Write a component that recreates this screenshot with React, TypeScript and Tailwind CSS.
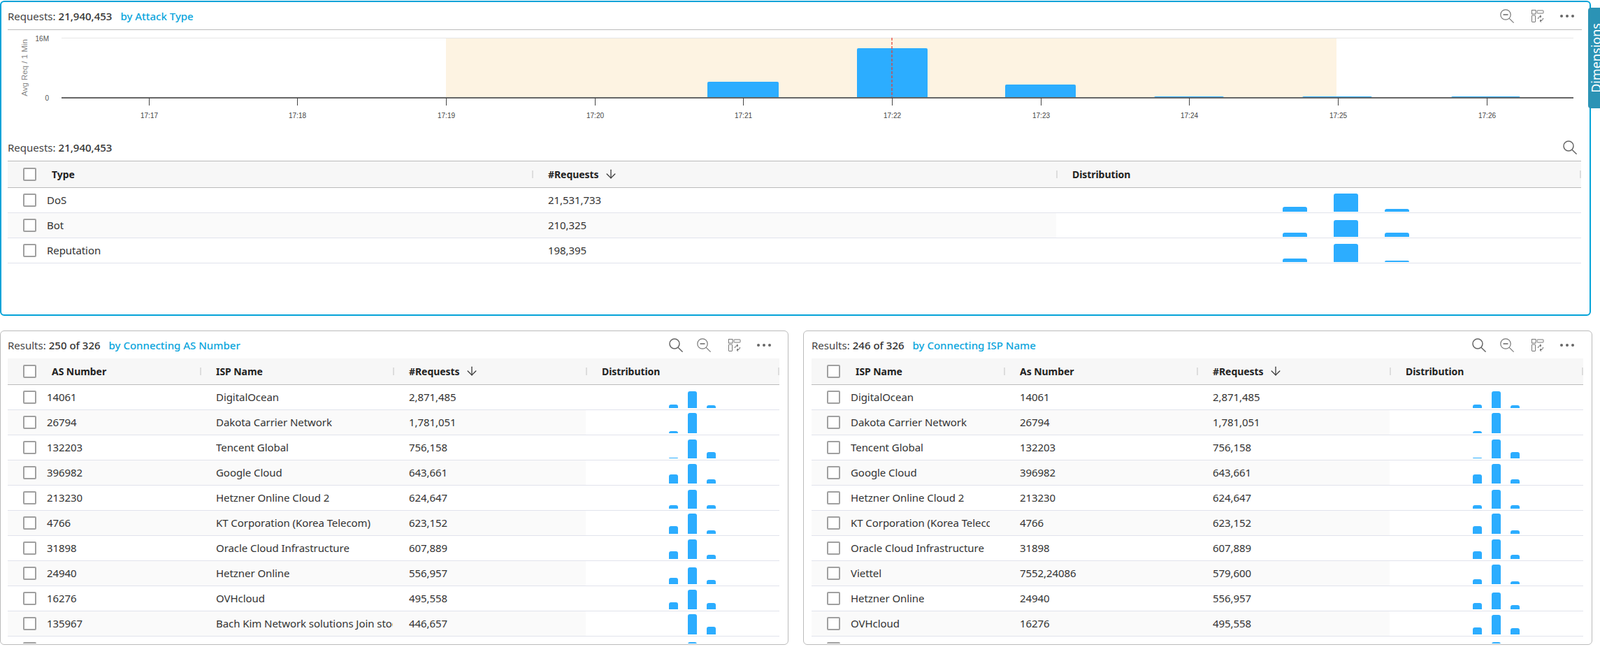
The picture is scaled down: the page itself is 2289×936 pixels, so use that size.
import { ArrowDown } from 'lucide-react';

type Row = { cells: string[]; bars: number[] };

const asRows: Row[] = [
  { cells: ['14061', 'DigitalOcean', '2,871,485'], bars: [5, 24, 4] },
  { cells: ['26794', 'Dakota Carrier Network', '1,781,051'], bars: [3, 29, 0] },
  { cells: ['132203', 'Tencent Global', '756,158'], bars: [1, 27, 9] },
  { cells: ['396982', 'Google Cloud', '643,661'], bars: [13, 28, 6] },
  { cells: ['213230', 'Hetzner Online Cloud 2', '624,647'], bars: [5, 27, 5] },
  { cells: ['4766', 'KT Corporation (Korea Telecom)', '623,152'], bars: [11, 29, 5] },
  { cells: ['31898', 'Oracle Cloud Infrastructure', '607,889'], bars: [11, 28, 6] },
  { cells: ['24940', 'Hetzner Online', '556,957'], bars: [9, 24, 6] },
  { cells: ['16276', 'OVHcloud', '495,558'], bars: [10, 28, 9] },
  { cells: ['135967', 'Bach Kim Network solutions Join stock', '446,657'], bars: [0, 29, 11] },
  { cells: ['', '', ''], bars: [0, 25, 0] },
];

const ispRows: Row[] = [
  { cells: ['DigitalOcean', '14061', '2,871,485'], bars: [5, 24, 4] },
  { cells: ['Dakota Carrier Network', '26794', '1,781,051'], bars: [3, 29, 0] },
  { cells: ['Tencent Global', '132203', '756,158'], bars: [1, 27, 9] },
  { cells: ['Google Cloud', '396982', '643,661'], bars: [13, 28, 6] },
  { cells: ['Hetzner Online Cloud 2', '213230', '624,647'], bars: [5, 27, 5] },
  { cells: ['KT Corporation (Korea Telecom)', '4766', '623,152'], bars: [11, 29, 5] },
  { cells: ['Oracle Cloud Infrastructure', '31898', '607,889'], bars: [11, 28, 6] },
  { cells: ['Viettel', '7552,24086', '579,600'], bars: [7, 28, 4] },
  { cells: ['Hetzner Online', '24940', '556,957'], bars: [9, 24, 6] },
  { cells: ['OVHcloud', '16276', '495,558'], bars: [10, 28, 9] },
  { cells: ['', '', ''], bars: [0, 25, 0] },
];

const typeRows: Row[] = [
  { cells: ['DoS', '21,531,733'], bars: [7, 26, 4] },
  { cells: ['Bot', '210,325'], bars: [6, 24, 6] },
  { cells: ['Reputation', '198,395'], bars: [5, 26, 2] },
];

const SearchIcon = () => (
  <svg width="20" height="20" viewBox="0 0 20 20" fill="none" stroke="#666" strokeWidth="1.5">
    <circle cx="8" cy="8" r="7" />
    <path d="M13 13.2 19.6 19.6" />
  </svg>
);

const ZoomOutIcon = () => (
  <svg width="20" height="20" viewBox="0 0 20 20" fill="none" stroke="#777" strokeWidth="1.2">
    <circle cx="8" cy="8" r="7.2" />
    <path d="M13.2 13.4 19.6 19.6" />
    <path d="M4.5 8h7" strokeWidth="1.5" stroke="#666" />
  </svg>
);

const ColumnsIcon = () => (
  <svg width="18" height="18" viewBox="0 0 18 18" fill="none" stroke="#777" strokeWidth="1">
    <rect x="0.5" y="0.5" width="5.5" height="5.5" />
    <rect x="8" y="1" width="9" height="4" rx="0.5" />
    <rect x="0.5" y="8" width="5" height="9.5" rx="0.5" />
    <path d="M9.5 13c0-2.2 1.5-3.5 4-3.5M12 7.6l2 1.9-2 1.9" stroke="#555" />
    <path d="M16.5 12c0 2.5-1.6 3.8-4 3.8M14 13.9l-2 1.9 2 1.9" stroke="#555" />
  </svg>
);

const DotsIcon = () => (
  <div className="flex w-[20px] justify-between">
    <span className="size-[4px] rounded-full bg-[#666]" />
    <span className="size-[4px] rounded-full bg-[#666]" />
    <span className="size-[4px] rounded-full bg-[#666]" />
  </div>
);

const Checkbox = () => <span className="block size-[19px] shrink-0 rounded-[2px] border-2 border-[#a0a0a0] bg-white" />;

const Sep = () => <span className="block h-[11px] w-[2px] shrink-0 bg-[#dddddd]" />;

const Spark = ({ bars, className }: { bars: number[]; className: string }) => (
  <div className={`flex h-full items-end ${className}`}>
    {bars.map((h, i) => (
      <span key={i} className="block shrink-0 rounded-t-[3px] bg-[#2cadff]" style={{ height: h, width: 'var(--bar)' }} />
    ))}
  </div>
);

const Title = ({ label, value, by }: { label: string; value: string; by?: string }) => (
  <div className="flex items-baseline text-[15px] leading-[20px] text-[#444]">
    <span>{label}</span>
    <span className="ml-[4px] font-medium text-[#333]">{value}</span>
    {by && <span className="ml-[12px] font-medium text-[#0aa5dc]">{by}</span>}
  </div>
);

const Tools = ({ search }: { search?: boolean }) => (
  <div className="flex items-center">
    {search && <div className="mr-[20px]"><SearchIcon /></div>}
    <ZoomOutIcon />
    <div className="ml-[25px]"><ColumnsIcon /></div>
    <div className="ml-[23px]"><DotsIcon /></div>
  </div>
);

const Table = ({
  heads,
  rows,
  cols,
  spark,
  barVars,
}: {
  heads: string[];
  rows: Row[];
  cols: string;
  spark: string;
  barVars: string;
}) => (
  <div className={`text-[15px] tracking-[-0.06px] text-[#333] ${barVars}`}>
    <div className={`grid h-[38px] border-b border-[#bbbbbb] bg-[#f7f7f7] pb-[1px] text-[14px] font-bold text-[#222] ${cols}`}>
      <div className="flex items-center pl-[22px]">
        <Checkbox />
        <span className="ml-[22px]">{heads[0]}</span>
      </div>
      {heads.slice(1, -1).map((h) => (
        <div key={h} className="flex items-center">
          <Sep />
          <span className="ml-[21px]">{h}</span>
          {h === '#Requests' && <ArrowDown size={20} strokeWidth={1.5} className="ml-[8px] text-[#333]" />}
        </div>
      ))}
      <div className="flex items-center justify-between">
        <div className="flex items-center">
          <Sep />
          <span className="ml-[21px]">{heads[heads.length - 1]}</span>
        </div>
        <Sep />
      </div>
    </div>
    {rows.map((r, i) => (
      <div key={i} className={`grid h-[36px] border-b border-[#e1e3ec] ${cols}`}>
        <div className={`flex items-center pl-[22px] pr-[20px] ${i % 2 ? 'bg-[#fafafa]' : ''}`}>
          <Checkbox />
          <span className="ml-[15px] overflow-hidden whitespace-nowrap">{r.cells[0]}</span>
        </div>
        {r.cells.slice(1).map((c, j) => (
          <div key={j} className={`flex items-center pl-[23px] ${i % 2 ? 'bg-[#fafafa]' : ''}`}>
            <span className="overflow-hidden whitespace-nowrap">{c}</span>
          </div>
        ))}
        <Spark bars={r.bars} className={spark} />
      </div>
    ))}
  </div>
);

const Chart = () => {
  const ticks = ['17:17', '17:18', '17:19', '17:20', '17:21', '17:22', '17:23', '17:24', '17:25', '17:26'];
  const bars = [
    { x: 1012, w: 102, y: 117 },
    { x: 1226, w: 101, y: 69 },
    { x: 1438, w: 101, y: 121 },
    { x: 1651, w: 100, y: 138 },
    { x: 1863, w: 100, y: 138 },
    { x: 2076, w: 99, y: 138 },
  ];
  return (
    <svg width="2252" height="149" viewBox="11 43 2252 149" className="block" fontFamily="'Liberation Sans', sans-serif">
      <rect x="638" y="54" width="1274" height="86" fill="#fdf3e2" />
      <path d="M88 54.5H2251" stroke="#e6e6e6" />
      {bars.map((b) => (
        <path
          key={b.x}
          d={`M${b.x} 139.5V${b.y + 2}q0-2 2-2H${b.x + b.w - 2}q2 0 2 2V139.5Z`}
          fill="#2cadff"
        />
      ))}
      <path d="M1276 54V140" stroke="#e8392f" strokeWidth="1.2" strokeDasharray="4 2" />
      <path d="M88 140H2251" stroke="#666" strokeWidth="2" />
      {ticks.map((t, i) => {
        const x = Math.round(212.5 + i * 212.7);
        return (
          <g key={t}>
            <path d={`M${x + 0.5} 140V151`} stroke="#444" />
            <text x={x + 0.5} y="169" textAnchor="middle" fontSize="10" fill="#444">{t}</text>
          </g>
        );
      })}
      <text x="70" y="59" textAnchor="end" fontSize="10" fill="#555">16M</text>
      <text x="70" y="144" textAnchor="end" fontSize="10" fill="#555">0</text>
      <text x="39" y="97" textAnchor="middle" fontSize="11.5" fill="#888" transform="rotate(-90 39 97)">Avg Req / 1 Min</text>
    </svg>
  );
};

export default function App() {
  return (
    <div className="relative h-[936px] w-[2289px] overflow-hidden bg-white pt-[1px] [font-family:'Noto_Sans_CJK_JP',sans-serif]">
      {/* Attack type panel */}
      <div className="h-[451px] w-[2276px] rounded-md border-2 border-[#04a3d8] pl-[9px]">
        <div className="flex h-[40px] w-[2252px] items-center justify-between border-b border-[#bbbbbb] pr-[11px]">
          <Title label="Requests:" value="21,940,453" by="by Attack Type" />
          <Tools />
        </div>
        <Chart />
        <div className="flex h-[38px] w-[2252px] items-center justify-between pr-[7px]">
          <Title label="Requests:" value="21,940,453" />
          <SearchIcon />
        </div>
        <div className="w-[2251px] border-t border-[#bbbbbb]">
          <Table
            heads={['Type', '#Requests', 'Distribution']}
            rows={typeRows}
            cols="grid-cols-[750px_750px_751px]"
            spark="gap-[38px] pb-[1px] pl-[324px]"
            barVars="[--bar:35px]"
          />
        </div>
      </div>

      {/* Dimensions tab */}
      <div className="absolute right-0 top-[11px] flex h-[144px] w-[17px] items-center overflow-hidden rounded-l-[4px] bg-[#2b93b5] pl-[1px]">
        <span className="rotate-180 whitespace-nowrap text-[18px] leading-[20px] text-white [writing-mode:vertical-rl]">Dimensions</span>
      </div>

      <div className="mt-[21px] flex gap-[21px]">
        <div className="h-[450px] w-[1128px] rounded-md border border-[#bbbbbb] pl-[10px]">
          <div className="flex h-[39px] w-[1104px] items-center justify-between pr-[12px]">
            <Title label="Results:" value="250 of 326" by="by Connecting AS Number" />
            <Tools search />
          </div>
          <div className="h-[408px] w-[1104px] overflow-hidden">
            <Table
              heads={['AS Number', 'ISP Name', '#Requests', 'Distribution']}
              rows={asRows}
              cols="grid-cols-[275px_276px_276px_277px]"
              spark="gap-[14px] pb-[2px] pl-[119px]"
              barVars="[--bar:13px]"
            />
          </div>
        </div>
        <div className="h-[450px] w-[1129px] rounded-md border border-[#bbbbbb] pl-[11px]">
          <div className="flex h-[39px] w-[1104px] items-center justify-between pr-[13px]">
            <Title label="Results:" value="246 of 326" by="by Connecting ISP Name" />
            <Tools search />
          </div>
          <div className="h-[408px] w-[1104px] overflow-hidden">
            <Table
              heads={['ISP Name', 'As Number', '#Requests', 'Distribution']}
              rows={ispRows}
              cols="grid-cols-[275px_276px_276px_277px]"
              spark="gap-[14px] pb-[2px] pl-[119px]"
              barVars="[--bar:13px]"
            />
          </div>
        </div>
      </div>
    </div>
  );
}
